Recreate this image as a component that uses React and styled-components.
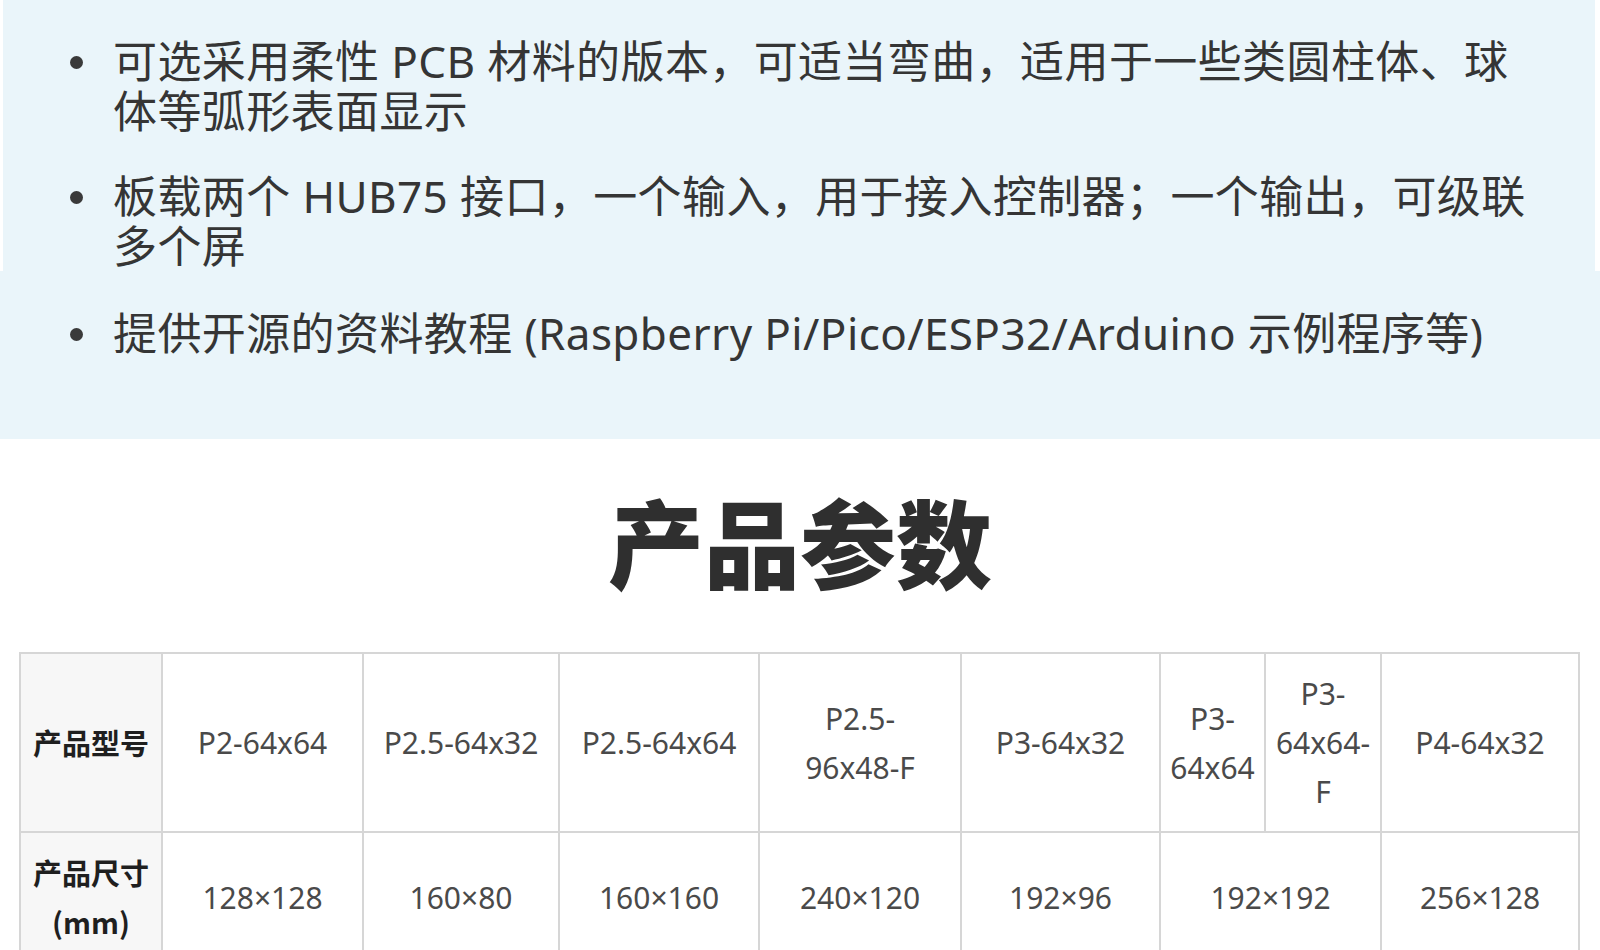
import React from "react";
import styled, { createGlobalStyle } from "styled-components";

const Global = createGlobalStyle`
  html, body { margin: 0; padding: 0; background: #ffffff; }
  body { font-family: "Noto Sans", "Noto Sans CJK SC", sans-serif; color: #333; }
`;

const Page = styled.div`
  width: 1600px;
  overflow: hidden;
`;

const BlueBlock = styled.section`
  background: #eaf5fa;
  margin: ${(p) => (p.$inset ? "0 5px 0 3px" : "0")};
  padding: ${(p) => p.$pad};
`;

const List = styled.ul`
  list-style: none;
  margin: 0;
  padding: 0 0 0 ${(p) => (p.$inset ? 67 : 70)}px;
  width: 1470px;
  display: flex;
  flex-direction: column;
  gap: 35px;
`;

const Item = styled.li`
  display: flex;
  align-items: flex-start;
  gap: 30px;
  font-size: 44px;
  line-height: 50px;
  letter-spacing: 0.4px;
  color: #353535;
`;

const Dot = styled.span`
  flex: none;
  width: 13px;
  height: 13px;
  border-radius: 50%;
  background: #3a3a3a;
  margin-top: 20px;
`;

const ItemText = styled.span`
  flex: 1;
  min-width: 0;
`;

const Title = styled.h2`
  margin: 43px 0 54px;
  text-align: center;
  font-family: "Noto Sans CJK SC", sans-serif;
  font-weight: 900;
  font-size: 96px;
  line-height: 116px;
  color: #2f2f2f;
`;

const Table = styled.table`
  margin-left: 19px;
  width: 1559px;
  table-layout: fixed;
  border-collapse: collapse;
  border: 2px solid #d6d6d6;
`;

const Cell = styled.td`
  border: 2px solid #d6d6d6;
  padding: 15px 6px;
  text-align: center;
  vertical-align: middle;
  font-size: 30px;
  line-height: 49px;
  color: #4a4a4a;
  background: #ffffff;
`;

const HeadCell = styled(Cell)`
  background: #f7f7f7;
  color: #1f1f1f;
  font-weight: 700;
  font-family: "Noto Sans CJK SC", sans-serif;
  font-size: 29px;
  line-height: 49px;
  padding: 15px 4px;
`;

const widths = [142, 201, 196, 200, 202, 199, 105, 116, 198];

const models = [
  ["P2-64x64"],
  ["P2.5-64x32"],
  ["P2.5-64x64"],
  ["P2.5-", "96x48-F"],
  ["P3-64x32"],
  ["P3-", "64x64"],
  ["P3-", "64x64-", "F"],
  ["P4-64x32"],
];

const sizes = [
  { v: "128×128" },
  { v: "160×80" },
  { v: "160×160" },
  { v: "240×120" },
  { v: "192×96" },
  { v: "192×192", span: 2 },
  { v: "256×128" },
];

const Lines = ({ lines }) =>
  lines.map((l, i) => (
    <React.Fragment key={i}>
      {i > 0 && <br />}
      {l}
    </React.Fragment>
  ));

export default function App() {
  return (
    <Page>
      <Global />
      <BlueBlock $inset $pad="36px 0 0">
        <List $inset>
          <Item>
            <Dot />
            <ItemText>
              可选采用柔性 PCB 材料的版本，可适当弯曲，适用于一些类圆柱体、球体等弧形表面显示
            </ItemText>
          </Item>
          <Item>
            <Dot />
            <ItemText>
              板载两个 HUB75 接口，一个输入，用于接入控制器；一个输出，可级联多个屏
            </ItemText>
          </Item>
        </List>
      </BlueBlock>
      <BlueBlock $pad="37px 0 81px">
        <List>
          <Item>
            <Dot />
            <ItemText>
              提供开源的资料教程 (Raspberry Pi/Pico/ESP32/Arduino 示例程序等)
            </ItemText>
          </Item>
        </List>
      </BlueBlock>
      <Title>产品参数</Title>
      <Table>
        <colgroup>
          {widths.map((w, i) => (
            <col key={i} style={{ width: w }} />
          ))}
        </colgroup>
        <tbody>
          <tr>
            <HeadCell>产品型号</HeadCell>
            {models.map((m, i) => (
              <Cell key={i}>
                <Lines lines={m} />
              </Cell>
            ))}
          </tr>
          <tr>
            <HeadCell>
              产品尺寸
              <br />
              (mm)
            </HeadCell>
            {sizes.map((s, i) => (
              <Cell key={i} colSpan={s.span || 1}>
                {s.v}
              </Cell>
            ))}
          </tr>
        </tbody>
      </Table>
    </Page>
  );
}
